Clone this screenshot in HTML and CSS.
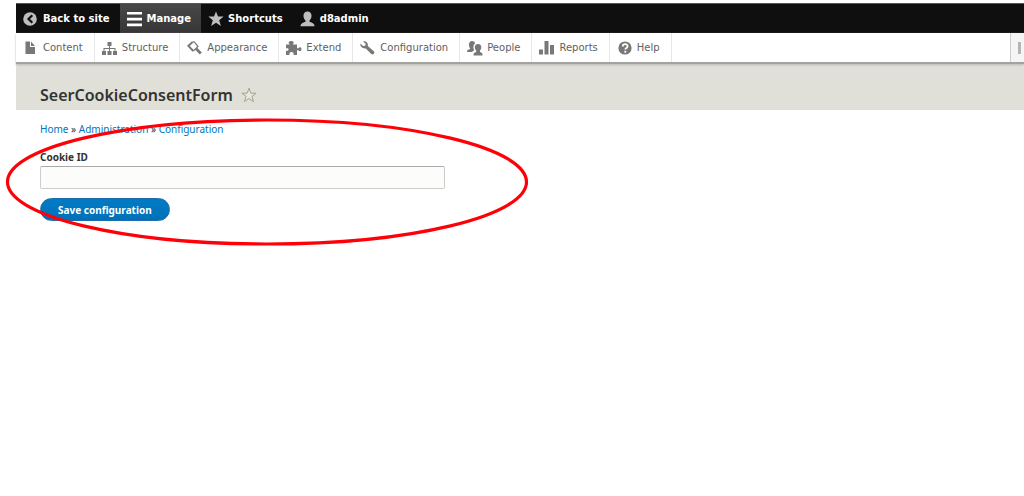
FILE: index.html
```html
<!DOCTYPE html>
<html lang="en">
<head>
<meta charset="utf-8">
<title>SeerCookieConsentForm</title>
<link rel="stylesheet" href="styles.css">
</head>
<body>
<div class="page">
  <nav class="bar" aria-label="Toolbar">
    <a class="tab" href="#"><svg class="icon" viewBox="0 0 16 16"><circle cx="7" cy="8" r="6.800" fill="#bebebe"/><path d="M9.300 4.200 5.500 8l3.800 3.800" fill="none" stroke="#0f0f0f" stroke-width="2.200"/></svg>Back to site</a>
    <a class="tab tab-active" href="#"><svg class="icon" viewBox="0 0 16 16"><path d="M0 1h15v2.600H0zM0 6.800h15v2.600H0zM0 12.600h15v2.600H0z" fill="#fff"/></svg>Manage</a>
    <a class="tab" href="#"><svg class="icon" viewBox="0 0 16 16"><path d="m8 .4 2 5.200h5.600l-4.400 3.600 1.700 5.800L8 11.700 3.100 15l1.700-5.800L.4 5.600H6z" fill="#bebebe"/></svg>Shortcuts</a>
    <a class="tab" href="#"><svg class="icon" viewBox="0 0 16 16"><path d="M7.500.5c2.600 0 4 1.700 4 4.300 0 2-.8 3.700-2 4.700v1.300c1.800.8 4.500 1.200 5 3.700v.8H.5v-.8c.5-2.500 3.200-2.900 5-3.700V9.500c-1.200-1-2-2.700-2-4.700 0-2.600 1.400-4.300 4-4.300z" fill="#bebebe"/></svg>d8admin</a>
  </nav>
  <div class="tray">
    <nav class="menu" aria-label="Administration">
      <a class="item" href="#"><svg class="icon" viewBox="0 0 16 16"><path d="M2.500 1.500H7v5.500h5v7H2.500zM8 1.500l4 4.500H8z"/></svg>Content</a>
      <a class="item" href="#"><svg class="icon" viewBox="0 0 16 16"><path d="M5.500 2h4v4H8v2h5.500v3H15v4h-4v-4h1.500V9H8v2h1.500v4h-4v-4H7V9H2.500v2H4v4H0v-4h1.500V8H7V6H5.500z"/></svg>Structure</a>
      <a class="item" href="#"><svg class="icon" viewBox="0 0 16 16"><path d="m5 2.500 2-.8 4 4.800L6.300 11" fill="none" stroke="#787878" stroke-width="1.200"/><path d="M0 5.800 5 1.200l1.200 1.600-3.400 3.200L7 10.300l-1.500 1.500zM10 7.500l4.800 4.900-2 2.100L8 9.400z"/></svg>Appearance</a>
      <a class="item" href="#"><svg class="icon" viewBox="0 0 16 16"><path d="M0 4.500h3.700C1.700 2.800 3 1 5.200 1s3.500 1.800 1.500 3.500H11V8.200h1.500c.6-1.300 3-1.200 3 1s-2.400 2.300-3 1H11V15H7.500c.7-2-.7-3-2-3s-2.700 1-2 3H0v-4.300c2 .5 2.500-.5 2.500-1.300S2 7.800 0 8.500z"/></svg>Extend</a>
      <a class="item" href="#"><svg class="icon" viewBox="0 0 16 16"><path d="M3 1.400C5.500.5 8.500 2.500 7.800 6l6 5.200c1.800 1.700-.7 4.400-2.500 2.800L5.800 8.400C2.700 9-.2 6.500.4 3.500L3 6l2.300-.3.300-2z"/></svg>Configuration</a>
      <a class="item" href="#"><svg class="icon" viewBox="0 0 16 16"><path d="M5 1c2 0 3 1 3 2.600C6 5 6 8 7 9.700L6.500 11l-2 1H0c0-2 1-2.300 3-3V8C1.300 6 1.500 1 5 1zM11 4c4 0 4 4.500 2 6.500V12c2 .5 2.500 1 2.500 3.500H6.500c0-2.500.7-3 2.700-3.500v-1.500C7.200 8.500 7.200 4 11 4z"/></svg>People</a>
      <a class="item" href="#"><svg class="icon" viewBox="0 0 16 16"><path d="M0 9.500h4v5H0zM5.500 1h4v13.500h-4zM11 5h4v9.500h-4z"/></svg>Reports</a>
      <a class="item" href="#"><svg class="icon" viewBox="0 0 16 16"><circle cx="8" cy="8" r="6.600"/><path d="M5.800 6.500c0-3 4.800-3 4.800-.2 0 1.700-2.300 1.700-2.300 3.300M8.300 10.800v2" fill="none" stroke="#fff" stroke-width="1.800"/></svg>Help</a>
    </nav>
    <button class="toggle" type="button" aria-label="Vertical orientation"><span class="toggle-mark"></span></button>
  </div>
  <header class="header">
    <h1 class="title">SeerCookieConsentForm</h1>
    <a class="star" href="#" aria-label="Add to shortcuts"><svg class="star-icon" viewBox="0 0 16 16"><path d="m8 1.200 1.800 5h5.300l-4.200 3.200 1.600 5.200L8 11.500l-4.500 3.100 1.600-5.200L.9 6.200h5.300z" fill="#e8e8df" stroke="#a5a48f"/></svg></a>
  </header>
  <main class="content">
    <nav class="crumbs" aria-label="Breadcrumb"><a href="#">Home</a> » <a href="#">Administration</a> » <a href="#">Configuration</a></nav>
    <form class="form">
      <label class="label" for="cookie-id">Cookie ID</label>
      <input class="field" id="cookie-id" type="text">
      <button class="save" type="button">Save configuration</button>
    </form>
  </main>
</div>
<svg class="callout" viewBox="0 0 524 130" aria-hidden="true"><ellipse cx="262" cy="65" rx="259.500" ry="62" fill="none" stroke="#ff0008" stroke-width="3.200"/></svg>
</body>
</html>
```
FILE: styles.css
```css
* { box-sizing: border-box; }
body {
  margin: 0;
  background: #fff;
  color: #333;
  font-family: "Noto Sans", sans-serif;
  font-size: 10px;
}
a { color: #0074bd; text-decoration: none; }
.page { padding: 3px 0 0 16px; }
.bar {
  display: flex;
  height: 30px;
  background: #0f0f0f;
  border-top: 1px solid #555;
  font: bold 10px "DejaVu Sans", sans-serif;
}
.tab, .item {
  display: flex;
  align-items: center;
  gap: 4px;
  padding: 0 11px 0 7px;
}
.tab { color: #fff; padding-right: 10px; }
.icon {
  flex: none;
  width: 16px;
  height: 16px;
  fill: #787878;
}
.tab-active { background: linear-gradient(#484848, #363636); }
.tray {
  display: flex;
  justify-content: space-between;
  height: 31px;
  background: #fff;
  border-bottom: 2px solid #a2a29f;
  box-shadow: 0 1px 2px #bbbbb5;
  position: relative;
}
.menu { display: flex; font: 10px "DejaVu Sans", sans-serif; }
.item { color: #616161; border-right: 1px solid #e6e6e6; }
.toggle {
  display: flex;
  align-items: center;
  justify-content: flex-end;
  width: 14px;
  padding: 0 3px 0 0;
  border: 0;
  border-left: 1px solid #ccc;
  background: #f5f5f5;
}
.toggle-mark { width: 3px; height: 12px; background: #b5b5b5; }
.header {
  display: flex;
  align-items: center;
  gap: 8px;
  padding: 18px 24px 2px;
  background: #e0e0d8;
}
.title {
  margin: 0;
  font: 600 16px/26px "Noto Sans", sans-serif;
}
.star { display: flex; }
.star-icon { width: 16px; height: 16px; }
.content { padding: 12px 24px; }
.crumbs { line-height: 14px; }
.form {
  display: flex;
  flex-direction: column;
  align-items: flex-start;
  margin-top: 14px;
}
.label { font-weight: 700; line-height: 14px; }
.field {
  width: 100%;
  max-width: 405px;
  height: 23px;
  margin: 2px 0 9px;
  padding: 2px 8px;
  border: 1px solid #ccc;
  border-top-color: #aaa;
  border-radius: 2px;
  background: #fcfcfa;
  font: inherit;
}
.save {
  height: 23px;
  padding: 0 17px;
  border: 1px solid #1e6cab;
  border-radius: 12px;
  background: linear-gradient(#007bc6, #0071b8);
  color: #fff;
  font: bold 10px "Noto Sans", sans-serif;
}
.callout {
  position: absolute;
  left: 5px;
  top: 117px;
  width: 524px;
  height: 130px;
  pointer-events: none;
}
```
